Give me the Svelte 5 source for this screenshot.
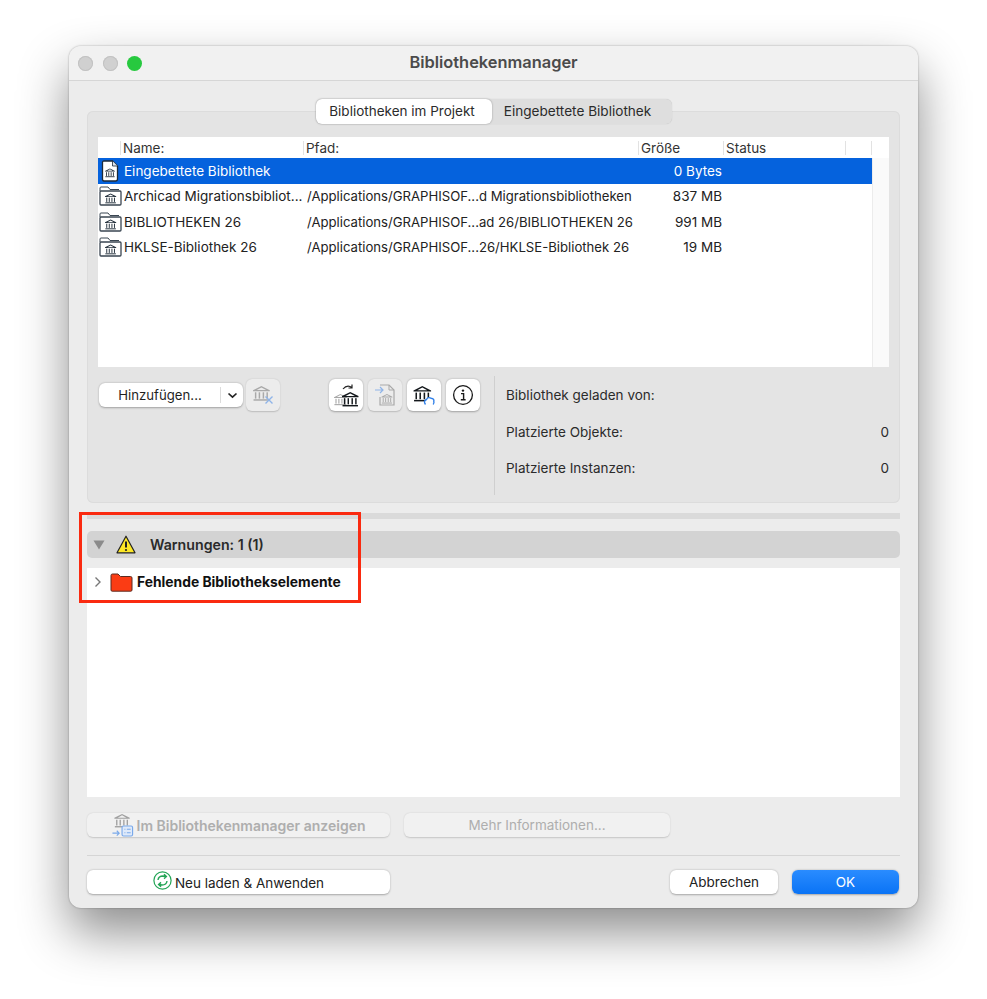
<script>
  const rows = [
    { name: "Eingebettete Bibliothek", path: "", size: "0 Bytes", embedded: true },
    { name: "Archicad Migrationsbibliot...", path: "/Applications/GRAPHISOF...d Migrationsbibliotheken", size: "837 MB" },
    { name: "BIBLIOTHEKEN 26", path: "/Applications/GRAPHISOF...ad 26/BIBLIOTHEKEN 26", size: "991 MB" },
    { name: "HKLSE-Bibliothek 26", path: "/Applications/GRAPHISOF...26/HKLSE-Bibliothek 26", size: "19 MB" },
  ];
  const heads = ["", "Name:", "Pfad:", "Größe", "Status", "", ""];
  const infos = [
    { label: "Bibliothek geladen von:", value: "" },
    { label: "Platzierte Objekte:", value: "0" },
    { label: "Platzierte Instanzen:", value: "0" },
  ];
</script>

{#snippet bank(x, y, s, color)}
  <g transform="translate({x} {y}) scale({s})" fill={color} stroke="none">
    <path d="M8 0 L16 4 V5 H0 V4 Z M8 1.4 L3.5 3.8 H12.5 Z" fill-rule="evenodd" />
    <rect x="1.8" y="6" width="1.4" height="6" />
    <rect x="5.4" y="6" width="1.4" height="6" />
    <rect x="9.2" y="6" width="1.4" height="6" />
    <rect x="12.8" y="6" width="1.4" height="6" />
    <rect x="0.5" y="12.6" width="15" height="1.4" />
  </g>
{/snippet}

<div class="page">
  <div class="window">
    <header class="titlebar">
      <div class="lights">
        <span class="light"></span>
        <span class="light"></span>
        <span class="light green"></span>
      </div>
      <h1>Bibliothekenmanager</h1>
    </header>

    <div class="content">
      <div class="tabs">
        <button class="tab active">Bibliotheken im Projekt</button>
        <button class="tab">Eingebettete Bibliothek</button>
      </div>

      <section class="panel">
        <div class="table">
          <div class="thead">
            {#each heads as h}
              <div class="th">{h}</div>
            {/each}
          </div>
          <div class="tbody">
            <div class="rows">
              {#each rows as row}
                <div class="row" class:selected={row.embedded}>
                  <span class="row-icon">
                    {#if row.embedded}
                      <svg width="18" height="22" viewBox="0 0 18 22">
                        <path d="M3 1 H11.5 L16.5 6 V19 Q16.5 21 14.5 21 H3 Q1.5 21 1.5 19 V2.5 Q1.5 1 3 1 Z" fill="#fff" stroke="#1d2a38" stroke-width="1.3" />
                        <path d="M11.5 1 V6 H16.5" fill="#dfe6ee" stroke="#1d2a38" stroke-width="0.8" />
                        {@render bank(4, 8.5, 0.62, "#1d2a38")}
                      </svg>
                    {:else}
                      <svg width="23" height="20" viewBox="0 0 23 20">
                        <path d="M1 5 V2 Q1 1 2 1 H9 L11 3.5 H20" fill="none" stroke="#3a4652" stroke-width="1" />
                        <path d="M1 18 V6 Q1 5 2 5 H21 Q22 5 22 6 V18 Q22 19 21 19 H2 Q1 19 1 18 Z" fill="#fff" stroke="#3a4652" stroke-width="1.3" />
                        {@render bank(6, 7.5, 0.7, "#26323e")}
                      </svg>
                    {/if}
                  </span>
                  <span class="name">{row.name}</span>
                  <span class="path">{row.path}</span>
                  <span class="size">{row.size}</span>
                </div>
              {/each}
            </div>
            <div class="scroller"></div>
          </div>
        </div>

        <div class="lower">
          <div class="actions">
            <div class="combo">
              <span class="combo-label">Hinzufügen...</span>
              <span class="combo-arrow">
                <svg width="11" height="7" viewBox="0 0 11 7"><path d="M1.5 1.5 L5.5 5.2 L9.5 1.5" fill="none" stroke="#222" stroke-width="1.7" /></svg>
              </span>
            </div>
            <button class="icon-btn off" aria-label="Entfernen">
              <svg width="24" height="22" viewBox="0 0 24 22">
                {@render bank(2, 2, 1.05, "#a9a9a9")}
                <path d="M14.5 12.5 L21.5 19.5 M21.5 12.5 L14.5 19.5" stroke="#8fb4e8" stroke-width="1.4" />
              </svg>
            </button>
            <div class="spacer"></div>
            <button class="icon-btn" aria-label="Ersetzen">
              <svg width="26" height="24" viewBox="0 0 26 24">
                <path d="M10 6 Q14 1 19 4.5 M19 1.5 V5 H15.5" fill="none" stroke="#222" stroke-width="1.2" />
                {@render bank(1, 11, 0.8, "#a8a8a8")}
                {@render bank(9, 9, 1.03, "#14181c")}
              </svg>
            </button>
            <button class="icon-btn off" aria-label="Exportieren">
              <svg width="24" height="24" viewBox="0 0 24 24">
                <path d="M7 2 H16 L21 7 V22 H7 V14" fill="none" stroke="#a9a9a9" stroke-width="1.2" />
                <path d="M16 2 V7 H21" fill="none" stroke="#a9a9a9" stroke-width="1" />
                <path d="M2 7 H10 M7 4 L10 7 L7 10" fill="none" stroke="#8fb4e8" stroke-width="1.2" />
                {@render bank(8.5, 11, 0.68, "#a9a9a9")}
              </svg>
            </button>
            <button class="icon-btn" aria-label="Aktualisieren">
              <svg width="24" height="24" viewBox="0 0 24 24">
                {@render bank(1.5, 3, 1.1, "#14181c")}
                <path d="M13.5 21.5 Q11 18 14.5 16.5 Q16 13.5 19 15.2 Q22.5 15.5 21.8 18.5 Q22.5 20.5 21 21.5" fill="#fff" stroke="#2f7fe8" stroke-width="1.4" />
              </svg>
            </button>
            <button class="icon-btn" aria-label="Info">
              <svg width="22" height="22" viewBox="0 0 22 22">
                <circle cx="11" cy="11" r="9.4" fill="none" stroke="#1a1a1a" stroke-width="1.3" />
                <circle cx="11" cy="6.6" r="1.2" fill="#1a1a1a" />
                <path d="M9 9.6 H11.6 V15.4 M8.8 15.8 H13.6" fill="none" stroke="#1a1a1a" stroke-width="1.4" />
              </svg>
            </button>
          </div>
          <div class="info">
            {#each infos as item}
              <div class="info-row"><span>{item.label}</span><span>{item.value}</span></div>
            {/each}
          </div>
        </div>
      </section>

      <div class="splitter"></div>

      <div class="warnings">
        <svg class="tri" width="12" height="10" viewBox="0 0 12 10"><path d="M0.5 0.5 H11.5 L6 9.5 Z" fill="#8b8b8b" /></svg>
        <svg class="warn" width="20" height="19" viewBox="0 0 20 19">
          <path d="M10 1.2 L19 17.8 H1 Z" fill="#fde725" stroke="#222" stroke-width="1.2" stroke-linejoin="round" />
          <path d="M10 6.5 V12.5" stroke="#222" stroke-width="2" />
          <circle cx="10" cy="15" r="1.1" fill="#222" />
        </svg>
        <span>Warnungen: 1 (1)</span>
      </div>

      <div class="messages">
        <div class="message">
          <svg class="chev" width="8" height="12" viewBox="0 0 8 12"><path d="M1.5 1.5 L6 6 L1.5 10.5" fill="none" stroke="#777" stroke-width="1.4" /></svg>
          <svg class="folder" width="23" height="19" viewBox="0 0 23 19">
            <path d="M1 17 V2.5 Q1 1 2.5 1 H8 L10.5 3.5 H20.5 Q22 3.5 22 5 V17 Q22 18.2 20.8 18.2 H2.2 Q1 18.2 1 17 Z" fill="#fb3c14" stroke="#5b2b20" stroke-width="1" />
          </svg>
          <span>Fehlende Bibliothekselemente</span>
        </div>
      </div>

      <div class="row-buttons">
        <button class="btn wide faded bold">
          <svg class="show-icon" width="22" height="23" viewBox="0 0 22 24">
            {@render bank(2, 0, 1, "#a0a0a0")}
            <path d="M0 20 H7 M4.5 17.5 L7 20 L4.5 22.5" fill="none" stroke="#7aa9ea" stroke-width="1.2" />
            <rect x="10" y="12.5" width="11" height="10.5" rx="1.5" fill="#dfeafa" stroke="#7aa9ea" stroke-width="1.2" />
            <path d="M12.5 16 H13.5 M15 16 H19 M12.5 19.5 H13.5 M15 19.5 H19" stroke="#7aa9ea" stroke-width="1.1" />
          </svg>
          Im Bibliothekenmanager anzeigen
        </button>
        <button class="btn more faded">Mehr Informationen...</button>
      </div>

      <div class="separator"></div>

      <div class="footer">
        <button class="btn wide reload-btn">
          <svg class="reload" width="19" height="19" viewBox="0 0 19 19">
            <circle cx="9.5" cy="9.5" r="8.6" fill="#fff" stroke="#22a455" stroke-width="1.2" />
            <path d="M5 9 Q5.5 5 10 5 L13 5.5 M11 3.2 L13.4 5.5 L11 7.6" fill="none" stroke="#22a455" stroke-width="1.4" />
            <path d="M14 10 Q13.5 14 9 14 L6 13.5 M8 11.4 L5.6 13.5 L8 15.8" fill="none" stroke="#22a455" stroke-width="1.4" />
          </svg>
          Neu laden &amp; Anwenden
        </button>
        <div class="spacer"></div>
        <button class="btn cancel">Abbrechen</button>
        <button class="btn ok">OK</button>
      </div>
    </div>

    <div class="highlight"></div>
  </div>
</div>

<style>
  :global(body) {
    background: #fff;
    font-family: Inter, "Liberation Sans", sans-serif;
  }

  .page {
    height: 999px;
    box-sizing: border-box;
    padding: 46px 0 0 69px;
    overflow: hidden;
  }

  .window {
    position: relative;
    width: 849px;
    height: 862px;
    display: flex;
    flex-direction: column;
    box-sizing: border-box;
    background: #ececec;
    border-radius: 12px;
    box-shadow: 0 0 2px rgba(0, 0, 0, 0.35), 0 24px 50px rgba(0, 0, 0, 0.45);
    color: #1f1f1f;
    font-size: 13.5px;
  }

  .titlebar {
    position: relative;
    height: 35px;
    box-sizing: border-box;
    flex: none;
    display: flex;
    align-items: center;
    justify-content: center;
    background: #f1f1f1;
    border-bottom: 1px solid #d6d6d6;
    border-radius: 12px 12px 0 0;
  }

  .titlebar h1 {
    margin: 0 0 2px;
    font-size: 16.4px;
    font-weight: 600;
    color: #4b4b4b;
  }

  .lights {
    position: absolute;
    left: 9px;
    top: 10px;
    display: flex;
    gap: 9.5px;
  }

  .light {
    width: 15px;
    height: 15px;
    border-radius: 50%;
    background: #d0d0d0;
    box-shadow: inset 0 0 0 1px #c2c2c2;
  }

  .light.green {
    background: #27c93f;
    box-shadow: none;
  }

  .content {
    flex: 1;
    display: flex;
    flex-direction: column;
    padding: 18px 18px 14px;
    min-height: 0;
  }

  button {
    font: inherit;
    color: inherit;
    border: none;
    padding: 0;
  }

  .tabs {
    position: relative;
    z-index: 1;
    align-self: center;
    display: flex;
    height: 25px;
    margin-bottom: -13px;
    background: #dedede;
    border-radius: 6px;
    box-shadow: 0 0 1px rgba(0, 0, 0, 0.2);
  }

  .tab {
    height: 25px;
    background: transparent;
    border-radius: 6px;
    color: #2b2b2b;
    padding-bottom: 2px;
  }

  .tab:first-child {
    width: 176px;
    padding-right: 3px;
  }

  .tab:last-child {
    width: 180px;
    padding-right: 8px;
    font-size: 13.6px;
  }

  .tab.active {
    background: #fff;
    box-shadow: 0 0 2px rgba(0, 0, 0, 0.35);
  }

  .panel {
    height: 392px;
    flex: none;
    display: flex;
    flex-direction: column;
    box-sizing: border-box;
    padding: 26px 11px 8px;
    background: #e4e4e4;
    border-radius: 6px;
    box-shadow: inset 0 0 0 1px #dcdcdc;
  }

  .table {
    height: 230px;
    flex: none;
    display: flex;
    flex-direction: column;
    background: #fff;
  }

  .thead {
    display: grid;
    grid-template-columns: 23px 183px 335px 85px 122px 26px 17px;
    height: 21px;
    flex: none;
    align-items: start;
  }

  .th {
    height: 14px;
    margin-top: 4px;
    line-height: 14px;
    padding-left: 2px;
    border-right: 1px solid #e2e2e2;
    box-sizing: border-box;
    white-space: nowrap;
    color: #333;
  }

  .th:last-child {
    border-right: none;
  }

  .tbody {
    flex: 1;
    display: flex;
    min-height: 0;
  }

  .rows {
    flex: 1;
  }

  .scroller {
    width: 16px;
    background: #fafafa;
    border-left: 1px solid #ececec;
  }

  .row {
    display: grid;
    grid-template-columns: 26px 183px 333px 82px;
    align-items: center;
    height: 25.5px;
    color: #222;
  }

  .row.selected {
    background: #0562dd;
    color: #fff;
  }

  .row-icon {
    display: flex;
    justify-content: center;
    padding-right: 2px;
  }

  .name,
  .path {
    white-space: nowrap;
    overflow: hidden;
  }

  .path {
    font-size: 13.15px;
  }

  .size {
    text-align: right;
    white-space: nowrap;
  }

  .lower {
    flex: 1;
    display: flex;
    margin-top: 9px;
  }

  .actions {
    width: 397px;
    box-sizing: border-box;
    height: 119px;
    display: flex;
    align-items: flex-start;
    gap: 5px;
    padding: 3px 14px 0 1px;
    border-right: 1px solid #cfcfcf;
  }

  .combo {
    width: 144px;
    height: 24px;
    margin-top: 4px;
    margin-right: -2px;
    display: flex;
    align-items: center;
    background: #fff;
    border-radius: 6px;
    box-shadow: 0 0.5px 2px rgba(0, 0, 0, 0.3);
  }

  .combo-label {
    flex: 1;
    text-align: center;
    padding-left: 1px;
    font-size: 13.2px;
  }

  .combo-arrow {
    width: 22px;
    height: 16px;
    display: flex;
    align-items: center;
    justify-content: center;
    border-left: 1px solid #dcdcdc;
  }

  .icon-btn {
    width: 34px;
    height: 32px;
    display: flex;
    align-items: center;
    justify-content: center;
    background: #fff;
    border-radius: 6px;
    box-shadow: 0 0.5px 2px rgba(0, 0, 0, 0.3);
  }

  .icon-btn.off {
    background: #ececec;
    box-shadow: 0 0.5px 1.5px rgba(0, 0, 0, 0.18);
  }

  .spacer {
    flex: 1;
  }

  .info {
    flex: 1;
    display: flex;
    flex-direction: column;
    gap: 18.5px;
    padding: 10px 0 0 11px;
  }

  .info-row {
    display: flex;
    justify-content: space-between;
    height: 18px;
    line-height: 18px;
    color: #2b2b2b;
  }

  .splitter {
    height: 6px;
    flex: none;
    margin-top: 10px;
    background: #dadada;
  }

  .warnings {
    height: 27px;
    flex: none;
    margin-top: 12px;
    display: flex;
    align-items: center;
    background: #d3d3d3;
    border-radius: 5px;
    font-size: 14.2px;
    font-weight: 600;
    color: #2a2a2a;
  }

  .tri {
    margin-left: 6px;
  }

  .warn {
    margin-left: 11px;
    margin-right: 14px;
  }

  .messages {
    height: 229px;
    flex: none;
    margin-top: 10px;
    background: #fff;
  }

  .message {
    height: 28px;
    display: flex;
    align-items: center;
    font-size: 13.85px;
    font-weight: 700;
    color: #111;
  }

  .chev {
    margin-left: 7px;
  }

  .folder {
    margin-left: 8px;
    margin-right: 4px;
  }

  .row-buttons {
    margin-top: 16px;
    display: flex;
    gap: 14px;
    flex: none;
  }

  .btn {
    position: relative;
    height: 24px;
    background: #fff;
    border-radius: 6px;
    box-shadow: 0 0.5px 2px rgba(0, 0, 0, 0.3);
    color: #222;
  }

  .btn.wide {
    width: 303px;
    display: flex;
    align-items: center;
    justify-content: center;
    gap: 3px;
  }

  .btn.more {
    width: 266px;
  }

  .btn.faded {
    background: #f1f1f1;
    color: #aeaeae;
    box-shadow: 0 0.5px 1.5px rgba(0, 0, 0, 0.16);
  }

  .bold {
    font-size: 14px;
    font-weight: 600;
  }

  .reload-btn {
    padding-top: 2px;
  }

  .reload {
    margin-top: -5px;
  }

  .separator {
    height: 1px;
    flex: none;
    margin-top: 18px;
    background: #d5d5d5;
  }

  .footer {
    margin-top: 14px;
    display: flex;
    flex: none;
    padding-right: 1px;
  }

  .btn.cancel {
    width: 108px;
    margin-right: 14px;
  }

  .btn.ok {
    width: 107px;
    color: #fff;
    background: linear-gradient(#2a8cff, #0a73f5);
  }

  /* annotation drawn over the window */
  .highlight {
    position: absolute;
    left: 10px;
    top: 466px;
    width: 282px;
    height: 91px;
    box-sizing: border-box;
    border: 3px solid #fa2a10;
    pointer-events: none;
  }
</style>
